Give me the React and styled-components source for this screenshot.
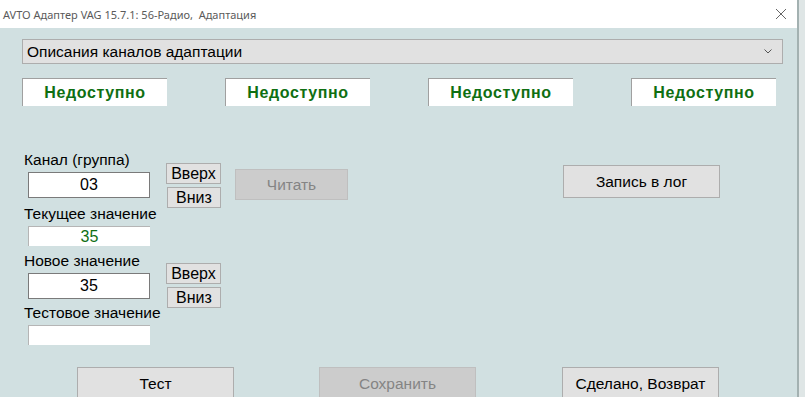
import React from 'react'
import styled, { createGlobalStyle } from 'styled-components'

const GlobalStyle = createGlobalStyle`
  html, body {
    margin: 0;
    padding: 0;
    background: #dfe6e6;
    overflow: hidden;
  }
`

const Window = styled.div`
  width: 797px;
  height: 397px;
  background: #d1e0e1;
  border-right: 2px solid #a3b1b1;
  font-family: "Liberation Sans", Arial, sans-serif;
  color: #000;
  overflow: hidden;
`

const TitleBar = styled.div`
  height: 28px;
  background: #fff;
  display: flex;
  align-items: center;
  justify-content: space-between;
  padding: 0 10px 0 3px;
  font-family: "Noto Sans", "Open Sans", sans-serif;
  font-size: 11px;
  color: #5a5a5a;
`

const Body = styled.div`
  padding: 11px 22px 0 22px;
`

const Select = styled.div`
  height: 23px;
  width: 745px;
  background: #e1e1e1;
  border: 1px solid #adadad;
  display: flex;
  align-items: center;
  justify-content: space-between;
  padding: 0 10px 0 4px;
  font-size: 15.5px;
`

const StatusRow = styled.div`
  display: flex;
  justify-content: space-between;
  width: 754px;
  margin-top: 14px;
`

const StatusBox = styled.div`
  width: 144px;
  height: 27px;
  background: #fff;
  border-top: 1px solid #a0a0a0;
  border-left: 1px solid #a0a0a0;
  display: flex;
  align-items: center;
  justify-content: center;
  color: #0f6f12;
  font-size: 16px;
  font-weight: bold;
  letter-spacing: 0.6px;
`

const Middle = styled.div`
  display: flex;
  align-items: flex-start;
  margin-top: 44px;
`

const Fields = styled.div`
  width: 144px;
  display: flex;
  flex-direction: column;
`

const Label = styled.div`
  font-size: 15.5px;
  line-height: 20px;
  height: 20px;
  padding-left: 2px;
  margin-top: ${p => p.$gap || 0}px;
  white-space: nowrap;
`

const Field = styled.div`
  box-sizing: border-box;
  width: 122px;
  height: ${p => (p.$plain ? 20 : 26)}px;
  margin-left: 6px;
  margin-top: 2px;
  background: #fff;
  border: ${p => (p.$plain ? 'none' : '1px solid #7a7a7a')};
  border-top: 1px solid ${p => (p.$plain ? '#b5b5b5' : '#7a7a7a')};
  border-left: 1px solid ${p => (p.$plain ? '#b5b5b5' : '#7a7a7a')};
  display: flex;
  align-items: center;
  justify-content: center;
  font-size: 16px;
  color: ${p => p.$color || '#000'};
`

const Spinners = styled.div`
  display: flex;
  flex-direction: column;
  width: 55px;
`

const SpinGroup = styled.div`
  display: flex;
  flex-direction: column;
  gap: 3px;
  margin-top: ${p => p.$top}px;
`

const SpinButton = styled.div`
  height: 21px;
  width: ${p => p.$w}px;
  margin-left: ${p => 55 - p.$w}px;
  box-sizing: border-box;
  background: #e1e1e1;
  border: 1px solid #adadad;
  display: flex;
  align-items: center;
  justify-content: center;
  font-size: 16px;
`

const Button = styled.div`
  width: 157px;
  height: 33px;
  box-sizing: border-box;
  background: ${p => (p.$disabled ? '#cccccc' : '#e1e1e1')};
  border: 1px solid ${p => (p.$disabled ? '#bfbfbf' : '#adadad')};
  color: ${p => (p.$disabled ? '#848484' : '#000')};
  display: flex;
  align-items: center;
  justify-content: center;
  font-size: 15.5px;
  margin-left: ${p => p.$ml || 0}px;
  margin-top: ${p => p.$mt || 0}px;
`

const ReadButton = styled(Button)`
  width: 113px;
  height: 31px;
`

const BottomRow = styled.div`
  display: flex;
  margin-top: 22px;
`

const Chevron = () => (
  <svg width="8" height="5" viewBox="0 0 8 5">
    <path d="M0.5 0.5 L4 4 L7.5 0.5" fill="none" stroke="#555" strokeWidth="1" />
  </svg>
)

const Close = () => (
  <svg width="12" height="12" viewBox="0 0 12 12">
    <path d="M1 1 L11 11 M11 1 L1 11" stroke="#666" strokeWidth="1" />
  </svg>
)

export default function App() {
  return (
    <>
      <GlobalStyle />
      <Window>
        <TitleBar>
          <span>AVTO Адаптер VAG 15.7.1: 56-Радио,&nbsp; Адаптация</span>
          <Close />
        </TitleBar>
        <Body>
          <Select>
            <span>Описания каналов адаптации</span>
            <Chevron />
          </Select>
          <StatusRow>
            {[0, 1, 2, 3].map(i => (
              <StatusBox key={i}>Недоступно</StatusBox>
            ))}
          </StatusRow>
          <Middle>
            <Fields>
              <Label>Канал (группа)</Label>
              <Field>03</Field>
              <Label $gap={6}>Текущее значение</Label>
              <Field $plain $color="#0f6f12">35</Field>
              <Label $gap={5}>Новое значение</Label>
              <Field>35</Field>
              <Label $gap={4}>Тестовое значение</Label>
              <Field $plain />
            </Fields>
            <Spinners>
              <SpinGroup $top={13}>
                <SpinButton $w={55}>Вверх</SpinButton>
                <SpinButton $w={54}>Вниз</SpinButton>
              </SpinGroup>
              <SpinGroup $top={55}>
                <SpinButton $w={55}>Вверх</SpinButton>
                <SpinButton $w={54}>Вниз</SpinButton>
              </SpinGroup>
            </Spinners>
            <ReadButton $disabled $ml={14} $mt={19}>Читать</ReadButton>
            <Button $ml={215} $mt={15}>Запись в лог</Button>
          </Middle>
          <BottomRow>
            <Button $ml={55}>Тест</Button>
            <Button $disabled $ml={85}>Сохранить</Button>
            <Button $ml={86}>Сделано, Возврат</Button>
          </BottomRow>
        </Body>
      </Window>
    </>
  )
}
